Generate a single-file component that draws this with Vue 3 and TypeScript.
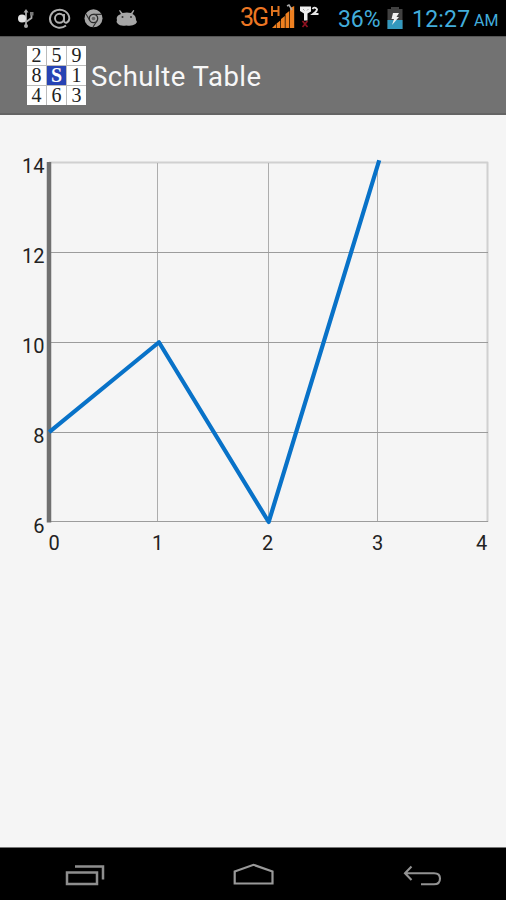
<script setup lang="ts">
interface Point {
  x: number
  y: number
}

const logoCells: string[] = ['2', '5', '9', '8', 'S', '1', '4', '6', '3']

const points: Point[] = [
  { x: 0, y: 8 },
  { x: 1, y: 10 },
  { x: 2, y: 6 },
  { x: 3.007, y: 14.05 },
]

const plot = { left: 48.5, right: 487.5, top: 47.5, bottom: 407 }
const scaleX = (v: number): number => plot.left + (v / 4) * (plot.right - plot.left)
const scaleY = (v: number): number => plot.bottom - ((v - 6) / 8) * (plot.bottom - plot.top)

const yTicks: number[] = [14, 12, 10, 8, 6]
const xTicks = [
  { value: 0, at: 54 },
  { value: 1, at: 157.5 },
  { value: 2, at: 267.5 },
  { value: 3, at: 377.5 },
  { value: 4, at: 481.5 },
]

const linePath: string = points.map((p) => `${scaleX(p.x) + 0.7},${scaleY(p.y)}`).join(' ')
</script>

<template>
  <div class="screen">
    <div class="status">
      <svg class="notifications" width="140" height="36" viewBox="0 0 140 36">
        <g fill="none" stroke="#aaa" stroke-width="1.8">
          <path d="M26 25V11M26 22L22 20V18M26 22L31.500 18V14" />
        </g>
        <circle cx="22" cy="18.500" r="4" fill="#e4e4e4" />
        <circle cx="26" cy="26" r="2" fill="#aaa" />
        <path d="M23.500 12.500L26 9L28.500 12.500Z" fill="#aaa" />
        <path d="M30 12h3.500v3.500H30z" fill="#777" />
        <g fill="none" stroke="#b0b0b0" stroke-width="1.900">
          <path d="M66 25.500A9.700 9 0 1 1 69.300 18C69.300 23 64.500 24 64 21V14" />
          <circle cx="59.500" cy="18.300" r="4.500" />
        </g>
        <circle cx="93.500" cy="18.300" r="9" fill="#a6a6a6" />
        <circle cx="93.500" cy="18.500" r="4.200" fill="#aaa" stroke="#292929" stroke-width="1.300" />
        <path d="M93.500 14.300H102M89.800 20.500L86 14M97.200 20.500L93 27" stroke="#333" stroke-width="1.200" />
        <circle cx="93.500" cy="18.500" r="1.800" fill="#666" />
        <path
          d="M117 20C116 17 118 15 121 14L119 10.500L120 10L122.500 13Q127 11.800 131 13L133.300 10L134.300 10.500L132.500 14Q136 15.500 136 20L137 22L135.500 24Q132 26.500 126.500 25.500Q120 26.500 118 24L116.500 22Z"
          fill="#a6a6a6"
        />
        <circle cx="122.500" cy="17" r="1" fill="#333" />
        <circle cx="131" cy="17" r="1" fill="#333" />
      </svg>
      <span class="network">3G</span>
      <svg class="signal" width="52" height="36" viewBox="270 0 52 36">
        <path d="M272 6V16M278.500 6V16M272 11H278.500" stroke="#df7420" stroke-width="2" />
        <path d="M272 28L276 24V28ZM276.600 23.500L280.300 20.500V28H276.600ZM281 19L284.800 16V28H281ZM285.500 14L289.300 11V28H285.500ZM290 8L294.200 6V28H290Z" fill="#ef8020" />
        <path d="M287 6L289 5L292 10" fill="none" stroke="#aaa" stroke-width="1.500" />
        <path d="M300 6.500H311V11.500L307.500 13.500V20.500H304V13.500L300 11Z" fill="#eee" />
        <path d="M303 9L304.500 10.500M308.500 9L307 10.500" stroke="#999" />
        <path d="M312.500 9Q314 6.500 316.500 8.500Q318.500 10 313 14H318.500" fill="none" stroke="#e6e6e6" stroke-width="1.900" />
        <path d="M302.500 21L307.500 27M307.500 21L302.500 27" stroke="#8f1120" stroke-width="1.700" />
      </svg>
      <span class="percent">36%</span>
      <svg class="battery" width="16" height="36" viewBox="0 0 16 36">
        <path d="M.5 9H4V7H12V9H15.500V29H.5Z" fill="#414141" />
        <path d="M.5 20H15.500V29H.5Z" fill="#3398bd" />
        <path d="M6 13H12L9.500 17H12L5 25L7 19H4.500Z" fill="#f2f2f2" />
      </svg>
      <span class="clock">12:27</span>
      <span class="meridiem">AM</span>
    </div>

    <header class="bar">
      <div class="logo">
        <span v-for="cell in logoCells" :key="cell" class="cell" :class="{ active: cell === 'S' }">{{ cell }}</span>
      </div>
      <h1 class="title">Schulte Table</h1>
    </header>

    <main class="content">
      <svg width="506" height="480" viewBox="0 0 506 480">
        <g fill="none">
          <path d="M49 47.500H487.500V407" stroke="#d0d0d0" stroke-width="2" stroke-linejoin="round" />
          <path d="M157.500 48V407M268.500 48V407M377.500 48V407" stroke="#adadad" />
          <path d="M49 137.500H488M49 227.500H488M49 317.500H488M49 406.500H488" stroke="#9c9c9c" />
        </g>
        <path d="M49 47V407.500" stroke="#707070" stroke-width="4.500" />
        <polyline :points="linePath" fill="none" stroke="#0872c8" stroke-width="4.200" stroke-linejoin="round" />
        <g class="labels">
          <text v-for="tick in yTicks" :key="tick" x="44.500" :y="scaleY(tick) + 10.500" text-anchor="end">{{ tick }}</text>
          <text v-for="tick in xTicks" :key="tick.value" :x="tick.at" y="435" text-anchor="middle">{{ tick.value }}</text>
        </g>
      </svg>
    </main>

    <nav class="nav">
      <svg width="40" height="24" viewBox="66 863 40 24">
        <path d="M68 872.500H98V884H68ZM76 866.500H104V879.500" fill="none" stroke="#8e8e8e" stroke-width="2.500" />
      </svg>
      <svg width="44" height="24" viewBox="232 863 44 24">
        <path d="M234.700 883.500V871.500L253.500 864.800L272.500 871.500V883.500Z" fill="none" stroke="#999" stroke-width="2.200" />
      </svg>
      <svg width="40" height="24" viewBox="402 863 40 24">
        <path d="M411.500 866.500L405 873.200L411.500 880M405 873.200H434Q440 873.200 440 878.500Q440 884.300 434 884.300H421" fill="none" stroke="#929292" stroke-width="2.100" />
      </svg>
    </nav>
  </div>
</template>

<style>
body {
  margin: 0;
}
</style>

<style scoped>
.screen {
  width: 506px;
  height: 900px;
  display: flex;
  flex-direction: column;
  overflow: hidden;
  background: #f5f5f5;
  font-family: Roboto, sans-serif;
}
svg {
  display: block;
  flex: none;
}
.status {
  height: 36px;
  flex: none;
  display: flex;
  background: #000;
  color: #42addb;
  font-size: 23px;
  line-height: 39px;
  white-space: nowrap;
}
.network {
  width: 30px;
  margin-left: 100px;
  color: #ed7723;
  font-size: 25px;
  letter-spacing: -2px;
  line-height: 36px;
}
.percent {
  width: 49px;
  margin-left: 16px;
  letter-spacing: -0.1px;
}
.clock {
  width: 62px;
  margin-left: 9px;
  letter-spacing: 0.2px;
}
.meridiem {
  font-size: 16px;
  line-height: 42px;
}
.bar {
  box-sizing: border-box;
  height: 79px;
  flex: none;
  display: flex;
  align-items: center;
  padding-left: 27px;
  background: #727272;
  border-top: 1px solid #555;
  border-bottom: 2px solid #646464;
}
.logo {
  display: grid;
  grid-template-columns: repeat(3, 19px);
  grid-template-rows: repeat(3, 19px);
  gap: 1px;
  width: 59px;
  background: #bbb;
}
.cell {
  display: flex;
  align-items: center;
  justify-content: center;
  background: #fff;
  color: #222;
  font: 20px/19px "Liberation Serif", serif;
}
.active {
  background: #2743b4;
  color: #fff;
  font-weight: 700;
}
.title {
  margin: 3px 0 0 5px;
  color: #f7f7f7;
  font-size: 27.5px;
  font-weight: 400;
  line-height: 32px;
  letter-spacing: 0.5px;
}
.content {
  height: 732px;
  flex: none;
}
.labels {
  fill: #222;
  font-size: 20px;
}
.nav {
  box-sizing: border-box;
  height: 53px;
  flex: none;
  display: flex;
  align-items: center;
  justify-content: space-between;
  padding: 2px 64px 0 65px;
  background: #000;
  border-top: 1px solid #777;
}
</style>
